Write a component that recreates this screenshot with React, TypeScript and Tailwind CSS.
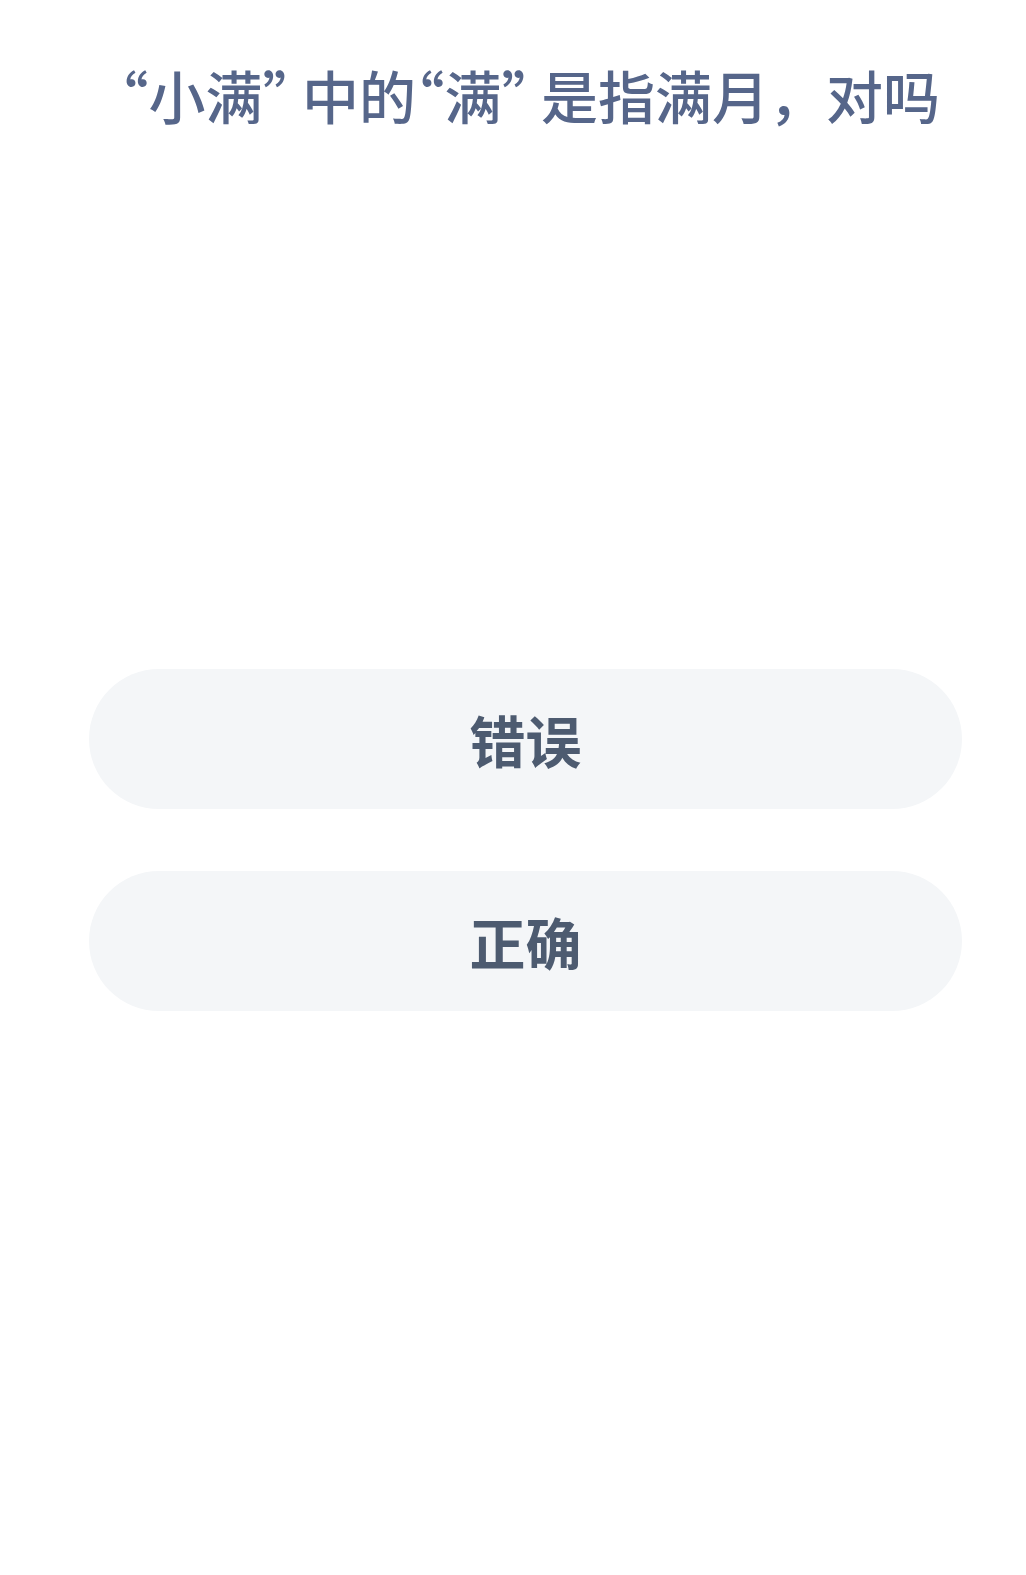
import React from "react";

const options = ["错误", "正确"];

// CJK quotes set half-width; closing quotes get a little extra room, the comma stays full-width
function Open() {
  return <span className="[font-feature-settings:'halt']">“</span>;
}

function Close() {
  return <span className="mr-[11px] [font-feature-settings:'halt']">”</span>;
}

export default function App() {
  return (
    <div
      className="min-h-[1575px] w-full bg-white flex flex-col"
      style={{ fontFamily: '"Noto Sans CJK SC", "Noto Sans", sans-serif' }}
    >
      <h1 className="mt-[54px] pl-[120px] text-[57px] leading-[80px] font-medium text-[#56668a] whitespace-nowrap">
        <Open />小满<Close />中的<Open />满<Close />是指满月，对吗
      </h1>

      <div className="mt-[535px] w-full pl-[89px] pr-[64px] flex flex-col gap-[62px]">
        {options.map((label) => (
          <button
            key={label}
            className="h-[140px] w-full rounded-full bg-[#f4f6f8] text-[56px] font-bold text-[#4d5b70] flex items-center justify-center"
          >
            {label}
          </button>
        ))}
      </div>
    </div>
  );
}
